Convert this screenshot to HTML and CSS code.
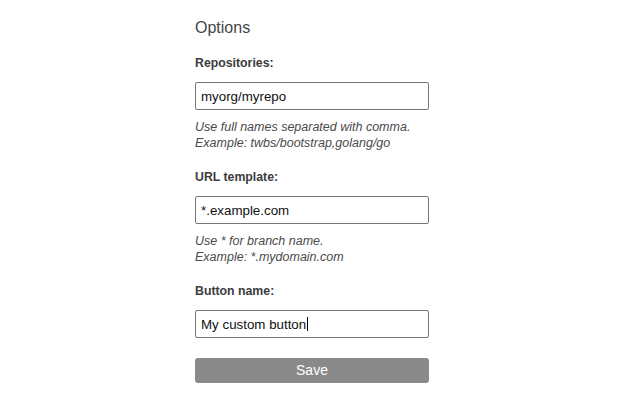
FILE: index.html
```
<!DOCTYPE html>
<html>
<head>
<meta charset="utf-8">
<link rel="stylesheet" href="styles.css">
</head>
<body>
<main class="page">
  <h1 class="title">Options</h1>
  <div class="field">
    <label class="label" for="repos">Repositories:</label>
    <input class="input" id="repos" type="text" value="myorg/myrepo">
    <p class="help">Use full names separated with comma.<br>Example: twbs/bootstrap,golang/go</p>
  </div>
  <div class="field">
    <label class="label" for="url">URL template:</label>
    <input class="input" id="url" type="text" value="*.example.com">
    <p class="help">Use * for branch name.<br>Example: *.mydomain.com</p>
  </div>
  <div class="field">
    <label class="label" for="name">Button name:</label>
    <div class="input-wrap">
      <input class="input" id="name" type="text" value="My custom button">
      <span class="caret"></span>
    </div>
  </div>
  <button class="save" type="button">Save</button>
</main>
</body>
</html>
```
FILE: styles.css
```
html, body {
  margin: 0;
  padding: 0;
  background: #fff;
}
.page {
  width: 234px;
  margin-left: 195px;
  padding-top: 18px;
  font-family: "Liberation Sans", Arial, sans-serif;
  color: #333;
}
.title {
  margin: 0 0 18px;
  font-size: 16px;
  line-height: 20px;
  font-weight: normal;
  color: #444;
}
.field {
  margin-bottom: 19px;
}
.label {
  display: block;
  margin-bottom: 11px;
  font-size: 12.3px;
  line-height: 15px;
  font-weight: bold;
  color: #3c3c3c;
}
.input-wrap {
  position: relative;
}
.input {
  display: block;
  box-sizing: border-box;
  width: 100%;
  height: 28px;
  margin: 0;
  padding: 0 5px;
  border: 1px solid #767676;
  border-radius: 2px;
  background: #fff;
  font-family: "Liberation Sans", Arial, sans-serif;
  font-size: 13.33px;
  color: #111;
  outline: none;
}
.caret {
  position: absolute;
  left: 112px;
  top: 7px;
  width: 1px;
  height: 14px;
  background: #000;
}
.help {
  margin: 9px 0 0;
  font-size: 12.5px;
  line-height: 16px;
  font-style: italic;
  color: #4a4a4a;
}
.field:last-of-type {
  margin-bottom: 20px;
}
.save {
  display: block;
  box-sizing: border-box;
  width: 100%;
  height: 25px;
  margin: 0;
  padding: 0;
  border: none;
  border-radius: 3px;
  background: #8a8a8a;
  color: #fff;
  font-family: "Liberation Sans", Arial, sans-serif;
  font-size: 14px;
  line-height: 25px;
}
```
